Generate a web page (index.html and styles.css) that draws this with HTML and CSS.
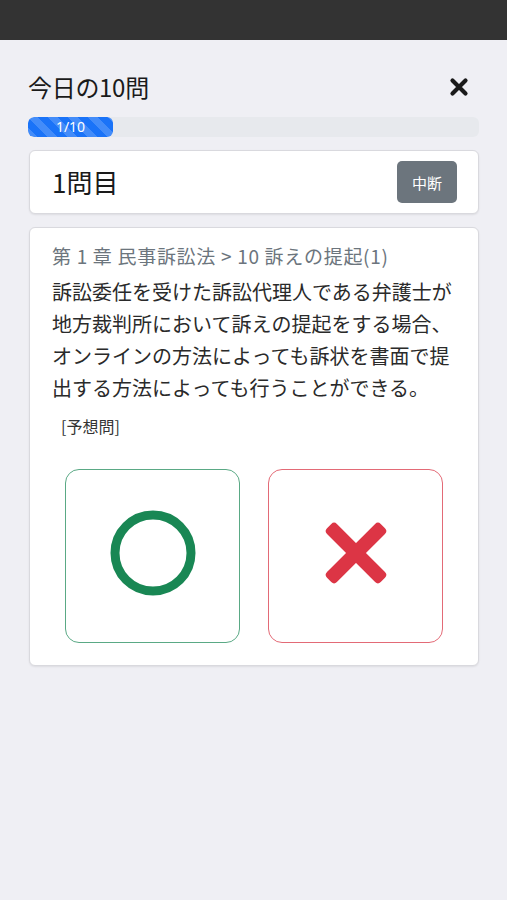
FILE: index.html
```html
<!DOCTYPE html>
<html lang="ja">
<head>
<meta charset="utf-8">
<title>今日の10問</title>
<link rel="stylesheet" href="styles.css">
</head>
<body>
<div class="topbar"></div>
<main class="main">
  <div class="header">
    <h1 class="title">今日の10問</h1>
    <button class="close" aria-label="閉じる">
      <svg width="20" height="20" viewBox="0 0 20 20"><path d="M3.5 3.5 L16.5 16.5 M16.5 3.5 L3.5 16.5" stroke="#1a1a1a" stroke-width="4.2" stroke-linecap="round"/></svg>
    </button>
  </div>
  <div class="progress">
    <div class="progress-fill">1/10</div>
  </div>
  <section class="card qhead">
    <div class="qnum">1問目</div>
    <button class="stop">中断</button>
  </section>
  <section class="card qbody">
    <div class="category">第 1 章 民事訴訟法 &gt; 10 訴えの提起(1)</div>
    <p class="question">訴訟委任を受けた訴訟代理人である弁護士が地方裁判所において訴えの提起をする場合、オンラインの方法によっても訴状を書面で提出する方法によっても行うことができる。</p>
    <div class="source">[予想問]</div>
    <div class="answers">
      <button class="answer yes" aria-label="○">
        <svg width="90" height="90" viewBox="0 0 90 90"><circle cx="45" cy="45" r="38" fill="none" stroke="#198754" stroke-width="9"/></svg>
      </button>
      <button class="answer no" aria-label="×">
        <svg width="70" height="70" viewBox="0 0 70 70"><g fill="#dc3545" transform="rotate(45 35 35)"><rect x="-3" y="28" width="76" height="14" rx="4"/><rect x="28" y="-3" width="14" height="76" rx="4"/></g></svg>
      </button>
    </div>
  </section>
</main>
</body>
</html>
```

FILE: styles.css
```css
* { box-sizing: border-box; }
html, body { margin: 0; padding: 0; }
body {
  background: #efeff4;
  font-family: "Noto Sans CJK JP", "Noto Sans", sans-serif;
  color: #212529;
  min-height: 900px;
}
.topbar {
  height: 40px;
  background: #333333;
}
.main {
  padding: 0 28px 0 29px;
}
.header {
  margin-top: 32px;
  height: 30px;
  display: flex;
  align-items: center;
  justify-content: space-between;
  margin-left: -1px;
}
.title {
  margin: 0;
  font-size: 24px;
  font-weight: 400;
  line-height: 30px;
  letter-spacing: -0.3px;
  color: #1a1a1a;
}
.close {
  border: 0;
  background: none;
  padding: 0;
  width: 20px;
  height: 20px;
  margin-right: 10px;
  display: flex;
}
.progress {
  margin-top: 15px;
  margin-left: -1px;
  height: 20px;
  background: #e7e9ed;
  border-radius: 6px;
  overflow: hidden;
}
.progress-fill {
  width: 85px;
  height: 100%;
  background-color: #1a73f8;
  background-image: linear-gradient(45deg, rgba(255,255,255,.18) 25%, transparent 25%, transparent 50%, rgba(255,255,255,.18) 50%, rgba(255,255,255,.18) 75%, transparent 75%, transparent);
  background-size: 20px 20px;
  border-radius: 6px;
  color: #fff;
  font-size: 14px;
  line-height: 20px;
  text-align: center;
  font-family: "Noto Sans", sans-serif;
}
.card {
  background: #fff;
  border: 1px solid #d9d9de;
  border-radius: 6px;
  box-shadow: 0 1px 2px rgba(0,0,0,.08);
}
.qhead {
  margin-top: 13px;
  height: 64px;
  display: flex;
  align-items: center;
  justify-content: space-between;
  padding: 0 21px 0 22px;
}
.qnum {
  font-size: 26px;
  line-height: 30px;
  color: #1a1a1a;
}
.stop {
  width: 60px;
  height: 42px;
  border: 0;
  border-radius: 5px;
  background: #6c757d;
  color: #fff;
  font-family: "Noto Sans CJK JP", sans-serif;
  font-size: 15px;
  padding: 0;
}
.qbody {
  margin-top: 13px;
  padding: 14px 22px 22px 22px;
}
.category {
  font-size: 19px;
  line-height: 28px;
  color: #6c757d;
  letter-spacing: 0.7px;
}
.question {
  margin: 6px 0 0 0;
  font-size: 20px;
  line-height: 32px;
  color: #2a2a2a;
}
.source {
  margin-top: 10px;
  padding-left: 9px;
  font-size: 16px;
  line-height: 24px;
  color: #333;
}
.answers {
  margin-top: 31px;
  display: flex;
  justify-content: center;
  gap: 28px;
}
.answer {
  width: 175px;
  height: 174px;
  background: #fff;
  border-radius: 14px;
  padding: 0 0 6px 0;
  display: flex;
  align-items: center;
  justify-content: center;
}
.answer.yes { border: 1.5px solid #5aa985; }
.answer.no { border: 1.5px solid #e36a76; }
```
